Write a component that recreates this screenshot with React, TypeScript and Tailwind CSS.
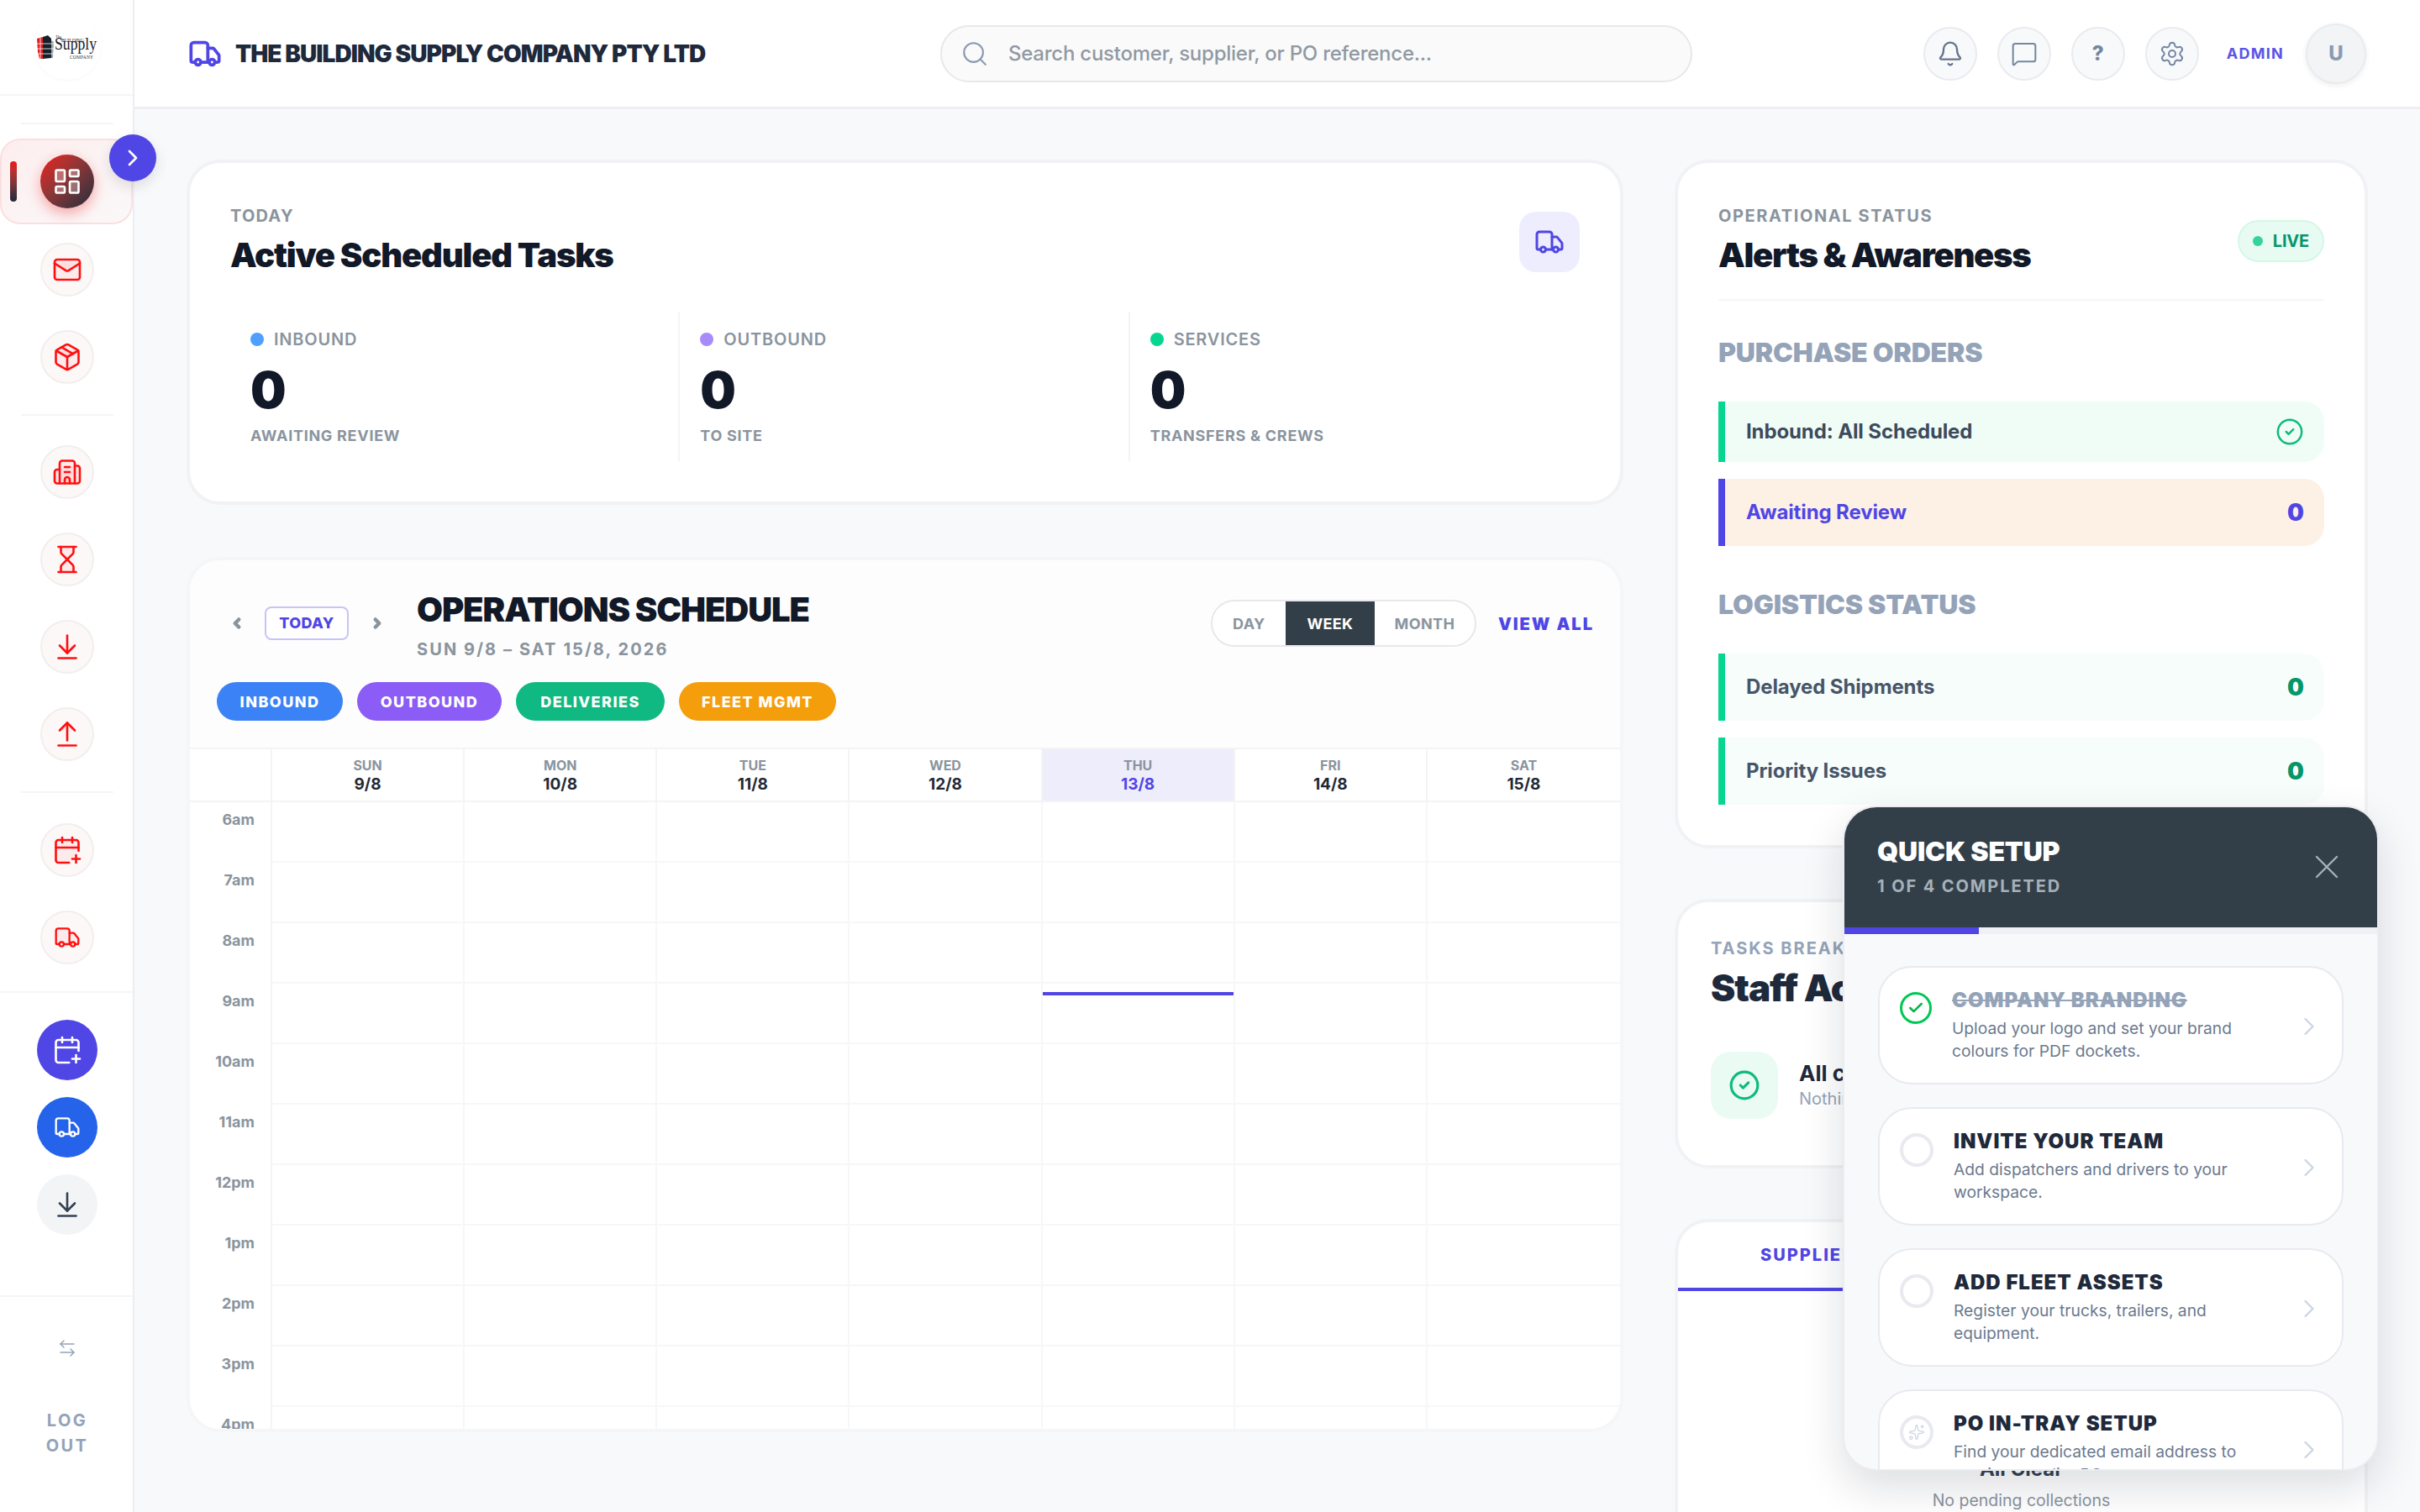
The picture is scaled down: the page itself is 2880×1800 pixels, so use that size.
import {
    ArrowDownToLine,
    ArrowLeftRight,
    ArrowUpFromLine,
    Bell,
    Building2,
    CalendarPlus,
    Check,
    ChevronLeft,
    ChevronRight,
    CircleCheck,
    Hourglass,
    LayoutDashboard,
    Mail,
    MessageSquare,
    Package,
    Search,
    Settings,
    Sparkles,
    Truck,
    X,
} from 'lucide-react';
import type { LucideIcon } from 'lucide-react';

const days = [
    { name: 'SUN', date: '9/8' },
    { name: 'MON', date: '10/8' },
    { name: 'TUE', date: '11/8' },
    { name: 'WED', date: '12/8' },
    { name: 'THU', date: '13/8', today: true },
    { name: 'FRI', date: '14/8' },
    { name: 'SAT', date: '15/8' },
];

const hours = ['6am', '7am', '8am', '9am', '10am', '11am', '12pm', '1pm', '2pm', '3pm', '4pm'];

const stats = [
    { label: 'INBOUND', dot: 'bg-[#4f9fff]', caption: 'AWAITING REVIEW' },
    { label: 'OUTBOUND', dot: 'bg-[#a78bfa]', caption: 'TO SITE' },
    { label: 'SERVICES', dot: 'bg-[#06d68f]', caption: 'TRANSFERS & CREWS' },
];

const chips = [
    { label: 'INBOUND', className: 'w-[150px] bg-[#3b82f6]' },
    { label: 'OUTBOUND', className: 'w-[172px] bg-[#8b5cf6]' },
    { label: 'DELIVERIES', className: 'w-[177px] bg-[#10b981]' },
    { label: 'FLEET MGMT', className: 'w-[187px] bg-[#f59e0b]' },
];

const setupSteps = [
    { title: 'COMPANY BRANDING', text: 'Upload your logo and set your brand colours for PDF dockets.', done: true },
    { title: 'INVITE YOUR TEAM', text: 'Add dispatchers and drivers to your workspace.' },
    { title: 'ADD FLEET ASSETS', text: 'Register your trucks, trailers, and equipment.' },
    { title: 'PO IN-TRAY SETUP', text: 'Find your dedicated email address to receive supplier POs.', sparkle: true },
];

function Logo() {
    return (
        <svg width="80" height="80" viewBox="0 0 80 80">
            <polygon points="4,31 11,29 11,55 7,55 5,47" fill="#e11d1d" />
            <polygon points="11,29 17,27 21,31 21,54 11,55" fill="#16202a" />
            <polygon points="21,33 24,35 23,54 21,54" fill="#9aa3ab" />
            <path d="M4 37h20M4 43h20M5 49h19M8 30v25" stroke="#fff" strokeWidth="0.8" />
            <text x="26" y="30" fontSize="5" fontFamily="Liberation Serif, serif" fill="#333">The</text>
            <text x="33" y="35" fontSize="6" fontFamily="Liberation Serif, serif" fill="#333" textLength="27">BUILDING</text>
            <text x="25" y="44" fontSize="22" fontFamily="Liberation Serif, serif" fill="#16202a" textLength="50" lengthAdjust="spacingAndGlyphs">Supply</text>
            <text x="43" y="55" fontSize="5.5" fontFamily="Liberation Serif, serif" fill="#333" textLength="28">COMPANY</text>
        </svg>
    );
}

function NavIcon({ icon: Icon, size = 36 }: { icon: LucideIcon; size?: number }) {
    return (
        <div className="flex h-16 w-16 items-center justify-center rounded-full border-2 border-[#f3eeee] bg-[#fdf8f8] text-[#ff1010]">
            <Icon size={size} strokeWidth={1.75} fill="currentColor" fillOpacity={0.06} />
        </div>
    );
}

function QuickAction({ icon: Icon, size = 36, className }: { icon: LucideIcon; size?: number; className: string }) {
    return (
        <div className={`flex h-[72px] w-[72px] items-center justify-center rounded-full ${className}`}>
            <Icon size={size} strokeWidth={1.75} />
        </div>
    );
}

function Sidebar() {
    return (
        <aside className="relative z-10 flex h-full w-[160px] shrink-0 flex-col items-center border-r-2 border-[#eceef2] bg-white pl-[2px]">
            <div className="-ml-[2px] flex h-[114px] w-[158px] shrink-0 items-start justify-center border-b-2 border-[#f5f6f8] pt-[15px] pl-[2px]">
                <div className="flex h-20 w-20 items-center justify-center rounded-full bg-white shadow-[0_1px_4px_rgba(0,0,0,0.03)]">
                    <Logo />
                </div>
            </div>
            <div className="mt-[32px] h-0.5 w-[110px] shrink-0 bg-[#f1f5f9]" />
            <div className="relative mt-[17px] -ml-[2px] flex h-[102px] w-[158px] shrink-0 items-center justify-center rounded-[24px] border-2 border-[#fbdfe0] bg-gradient-to-br from-[#fdeeee] to-[#faf8f9] pl-[2px]">
                <div className="absolute top-[25px] left-[10px] h-12 w-2 rounded-full bg-gradient-to-b from-[#ef1111] to-[#1e293b]" />
                <div className="flex h-16 w-16 items-center justify-center rounded-full bg-gradient-to-br from-[#ef1111] to-[#1e293b] text-white shadow-[0_6px_16px_rgba(239,17,17,0.35)]">
                    <LayoutDashboard size={36} strokeWidth={1.75} fill="rgba(255,255,255,0.3)" />
                </div>
                <div className="absolute -top-[7px] left-[128px] flex h-14 w-14 items-center justify-center rounded-full bg-[#4f46e5] text-white shadow-[0_6px_16px_rgba(15,23,42,0.12)]">
                    <ChevronRight size={32} strokeWidth={2} />
                </div>
            </div>
            <div className="mt-[22px] flex shrink-0 flex-col gap-10">
                <NavIcon icon={Mail} />
                <NavIcon icon={Package} />
            </div>
            <div className="mt-[36px] h-0.5 w-[110px] shrink-0 bg-[#f3f5f8]" />
            <div className="mt-[35px] flex shrink-0 flex-col gap-10">
                <NavIcon icon={Building2} />
                <NavIcon icon={Hourglass} />
                <NavIcon icon={ArrowDownToLine} />
                <NavIcon icon={ArrowUpFromLine} />
            </div>
            <div className="mt-[36px] h-0.5 w-[110px] shrink-0 bg-[#f3f5f8]" />
            <div className="mt-[36px] flex shrink-0 flex-col gap-10">
                <NavIcon icon={CalendarPlus} />
                <NavIcon icon={Truck} size={32} />
            </div>
            <div className="mt-[32px] -ml-[2px] w-[158px] shrink-0 border-t-2 border-[#f3f5f8]" />
            <div className="mt-[32px] flex shrink-0 flex-col gap-5">
                <QuickAction icon={CalendarPlus} className="bg-[#4f46e5] text-white" />
                <QuickAction icon={Truck} size={32} className="bg-[#2563eb] text-white" />
                <QuickAction icon={ArrowDownToLine} className="bg-[#f3f4f6] text-[#334155]" />
            </div>
            <div className="mt-[72px] -ml-[2px] w-[158px] shrink-0 border-t-2 border-[#f3f5f8]" />
            <ArrowLeftRight size={24} strokeWidth={1.5} className="mt-[49px] shrink-0 text-[#94a3b8]" />
            <div className="mt-[59px] w-[60px] shrink-0 text-center text-[20px] leading-[30px] font-bold tracking-[0.12em] text-[#94a3b8]">LOG OUT</div>
        </aside>
    );
}

function Header() {
    return (
        <header className="flex h-[130px] shrink-0 items-center border-b-[3px] border-[#eeeff2] bg-white px-[64px]">
            <Truck size={40} strokeWidth={2.25} className="text-[#4f46e5]" />
            <div className="ml-[16px] w-[839px] shrink-0 text-[28px] leading-8 font-black tracking-[-0.033em] text-[#1e293b]">THE BUILDING SUPPLY COMPANY PTY LTD</div>
            <div className="flex h-[68px] w-[895px] shrink-0 items-center rounded-full border-2 border-[#e7e8ec] bg-[#fafafa] pl-[22px]">
                <Search size={34} strokeWidth={1.5} className="text-[#8a9ab0]" />
                <span className="ml-[23px] text-[24px] font-medium tracking-[-0.01em] text-[#9099a3]">Search customer, supplier, or PO reference...</span>
            </div>
            <div className="ml-auto flex items-center gap-6">
                <div className="flex h-16 w-16 items-center justify-center rounded-full border-2 border-[#e9ebee] bg-[#f8f9fb] text-[#64748b]">
                    <Bell size={32} strokeWidth={1.75} />
                </div>
                <div className="flex h-16 w-16 items-center justify-center rounded-full border-2 border-[#e9ebee] bg-[#f8f9fb] text-[#7486a0]">
                    <MessageSquare size={32} strokeWidth={1.5} />
                </div>
                <div className="flex h-16 w-16 items-center justify-center rounded-full border-2 border-[#e9ebee] bg-[#f8f9fb] text-[24px] font-extrabold text-[#7486a0]">?</div>
                <div className="flex h-16 w-16 items-center justify-center rounded-full border-2 border-[#e9ebee] bg-[#f8f9fb] text-[#7486a0]">
                    <Settings size={32} strokeWidth={1.5} />
                </div>
            </div>
            <div className="mr-[26px] ml-[33px] text-[18px] font-bold tracking-[0.07em] text-[#5b54e8]">ADMIN</div>
            <div className="flex h-[72px] w-[72px] shrink-0 items-center justify-center rounded-full border-2 border-[#e9ebee] bg-[#f3f4f6] text-[24px] font-extrabold text-[#8a9ab0] shadow-[0_2px_6px_rgba(15,23,42,0.08)]">U</div>
        </header>
    );
}

function ScheduledTasks() {
    return (
        <section className="h-[411px] shrink-0 rounded-[40px] border-4 border-[#f1f2f5] bg-white px-[48px] pt-[49px]">
            <div className="flex items-start justify-between">
                <div>
                    <div className="text-[20px] leading-7 font-bold tracking-[0.06em] text-[#8a949e]">TODAY</div>
                    <h2 className="mt-[9px] text-[40px] leading-[48px] font-black tracking-[-0.029em] text-[#111827]">Active Scheduled Tasks</h2>
                </div>
                <div className="mt-[9px] flex h-[72px] w-[72px] items-center justify-center rounded-[20px] bg-[#eeedfd] text-[#4f46e5]">
                    <Truck size={36} strokeWidth={2} />
                </div>
            </div>
            <div className="mt-[43px] grid h-[178px] grid-cols-3">
                {stats.map((stat, index) => (
                    <div key={stat.label} className={`pt-[19px] pl-[24px] ${index < 2 ? 'border-r-2 border-[#f3f4f6]' : ''}`}>
                        <div className="flex items-center gap-3 text-[20px] leading-7 font-semibold tracking-[0.04em] text-[#8a949e]">
                            <span className={`h-4 w-4 rounded-full ${stat.dot}`} />
                            {stat.label}
                        </div>
                        <div className="mt-[16px] text-[60px] leading-[60px] font-black text-[#111827]">0</div>
                        <div className="mt-[12px] text-[18px] leading-[26px] font-bold tracking-[0.04em] text-[#8a949e]">{stat.caption}</div>
                    </div>
                ))}
            </div>
        </section>
    );
}

function Schedule() {
    return (
        <section className="h-[1042px] shrink-0 overflow-hidden rounded-[40px] border-4 border-[#f5f6f8] bg-[#fdfdfd]">
            <div className="h-[223px] pt-[45px] pr-[31px] pl-[32px]">
                <div className="flex items-start">
                    <div className="mt-[10px] flex items-center">
                        <ChevronLeft size={18} strokeWidth={6} className="ml-[15px] text-[#8a949e]" />
                        <div className="ml-[24px] flex h-10 w-[100px] items-center justify-center rounded-lg border-2 border-[#c7c4f9] bg-white pb-0.5 text-[18px] font-extrabold tracking-[0.02em] text-[#4f46e5]">TODAY</div>
                        <ChevronRight size={18} strokeWidth={6} className="ml-[25px] text-[#8a949e]" />
                    </div>
                    <div className="ml-[38px]">
                        <h2 className="-mt-[8px] text-[40px] leading-[44px] font-black tracking-[-0.028em] text-[#111827]">OPERATIONS SCHEDULE</h2>
                        <div className="mt-[11px] text-[20px] leading-7 font-bold tracking-[0.105em] text-[#8a949e]">SUN 9/8 – SAT 15/8, 2026</div>
                    </div>
                    <div className="mt-[2px] ml-auto flex items-center">
                        <div className="flex h-[56px] w-[316px] items-center overflow-hidden rounded-full border-2 border-[#e7e8ec] bg-white text-[18px] font-bold tracking-[0.02em] text-[#8a949e]">
                            <div className="flex w-[87px] justify-center">DAY</div>
                            <div className="flex h-full w-[106px] items-center justify-center bg-[#333f48] text-white">WEEK</div>
                            <div className="flex flex-1 justify-center">MONTH</div>
                        </div>
                        <div className="mt-[2px] ml-[26px] text-[20px] font-black tracking-[0.1em] text-[#4f46e5]">VIEW ALL</div>
                    </div>
                </div>
                <div className="mt-[25px] flex gap-[17px]">
                    {chips.map((chip) => (
                        <div key={chip.label} className={`flex h-[46px] items-center justify-center rounded-full text-[18px] font-extrabold tracking-[0.08em] text-white ${chip.className}`}>
                            {chip.label}
                        </div>
                    ))}
                </div>
            </div>
            <div className="border-t-2 border-[#f3f4f6] bg-white">
                <div className="grid h-[63px] grid-cols-[98px_repeat(7,1fr)] border-b-2 border-[#f3f4f6]">
                    <div className="border-r-2 border-[#f3f4f6]" />
                    {days.map((day) => (
                        <div key={day.name} className={`flex flex-col items-center justify-center border-r-2 border-[#f3f4f6] last:border-r-0 ${day.today ? 'bg-[#eeedfb]' : ''}`}>
                            <span className="text-[16px] leading-[22px] font-bold text-[#8a949e]">{day.name}</span>
                            <span className={`text-[19px] leading-[24px] font-bold ${day.today ? 'text-[#4f46e5]' : 'text-[#1f2937]'}`}>{day.date}</span>
                        </div>
                    ))}
                </div>
                {hours.map((hour) => (
                    <div key={hour} className="grid h-[72px] grid-cols-[98px_repeat(7,1fr)]">
                        <div className="border-r-2 border-[#f3f4f6] pt-[9px] pr-[19px] text-right text-[18px] leading-6 font-bold text-[#8a949e]">{hour}</div>
                        {days.map((day) => (
                            <div key={day.name} className="relative border-r-2 border-b-2 border-[#f6f7f8] last:border-r-0">
                                {day.today && hour === '9am' && <div className="absolute top-[10px] right-0 left-0 h-1 bg-[#4f46e5]" />}
                            </div>
                        ))}
                    </div>
                ))}
            </div>
        </section>
    );
}

function StatusRow({ label, value, bar, bg, labelClass, valueClass, height = 'h-20' }: { label: string; value?: string; bar: string; bg: string; labelClass: string; valueClass?: string; height?: string }) {
    return (
        <div className={`flex items-center justify-between rounded-r-[24px] border-l-8 pr-[24px] pl-[25px] ${height} ${bar} ${bg}`}>
            <span className={`text-[24px] font-bold tracking-[-0.005em] ${labelClass}`}>{label}</span>
            {value ? <span className={`text-[28px] font-black ${valueClass}`}>{value}</span> : <CircleCheck size={34} strokeWidth={1.75} className="text-[#10b981]" />}
        </div>
    );
}

function Alerts() {
    return (
        <section className="h-[820px] shrink-0 rounded-[40px] border-4 border-[#f1f2f5] bg-white px-[48px] pt-[49px]">
            <div className="flex items-start justify-between border-b-2 border-[#f5f6f9] pb-[28px]">
                <div>
                    <div className="text-[20px] leading-7 font-bold tracking-[0.08em] text-[#8a949e]">OPERATIONAL STATUS</div>
                    <h2 className="mt-[9px] text-[40px] leading-[48px] font-black tracking-[-0.032em] text-[#111827]">Alerts &amp; Awareness</h2>
                </div>
                <div className="mt-[19px] flex h-[50px] items-center gap-3 rounded-full border-2 border-[#d4f7e7] bg-[#e8fbf3] px-[16px] text-[20px] font-bold tracking-[-0.01em] text-[#059669]">
                    <span className="h-3 w-3 rounded-full bg-[#34d399]" />
                    LIVE
                </div>
            </div>
            <h3 className="mt-[42px] text-[32px] leading-[40px] font-black tracking-[-0.005em] text-[#94a3b8]">PURCHASE ORDERS</h3>
            <div className="mt-[38px] flex flex-col gap-5">
                <StatusRow label="Inbound: All Scheduled" bar="border-[#06d68f]" bg="bg-[#f0fdf7]" labelClass="text-[#3d4b5c]" height="h-[72px]" />
                <StatusRow label="Awaiting Review" value="0" bar="border-[#4f46e5]" bg="bg-[#fdf1e5]" labelClass="text-[#4f46e5]" valueClass="text-[#4f46e5]" />
            </div>
            <h3 className="mt-[50px] text-[32px] leading-[40px] font-black tracking-[-0.005em] text-[#94a3b8]">LOGISTICS STATUS</h3>
            <div className="mt-[38px] flex flex-col gap-5">
                <StatusRow label="Delayed Shipments" value="0" bar="border-[#06d68f]" bg="bg-[#f7fdfb]" labelClass="text-[#475569]" valueClass="text-[#059669]" />
                <StatusRow label="Priority Issues" value="0" bar="border-[#06d68f]" bg="bg-[#f7fdfb]" labelClass="text-[#475569]" valueClass="text-[#059669]" />
            </div>
        </section>
    );
}

function StaffCard() {
    return (
        <section className="h-[321px] shrink-0 rounded-[40px] border-4 border-[#f1f2f5] bg-white px-[39px] pt-[41px]">
            <div className="text-[20px] leading-7 font-bold tracking-[0.1em] text-[#94a3b8]">TASKS BREAKDOWN</div>
            <h2 className="mt-[9px] text-[44px] leading-[48px] font-black tracking-[-0.025em] text-[#1e293b]">Staff Activity</h2>
            <div className="mt-[52px] flex items-center gap-[25px]">
                <div className="flex h-20 w-20 items-center justify-center rounded-[24px] bg-[#eafbf3] text-[#10b981]">
                    <CircleCheck size={38} strokeWidth={2} />
                </div>
                <div>
                    <div className="text-[26px] leading-8 font-bold text-[#1e293b]">All clear</div>
                    <div className="text-[20px] leading-7 text-[#94a3b8]">Nothing scheduled</div>
                </div>
            </div>
        </section>
    );
}

function CollectionsCard() {
    return (
        <section className="flex h-[420px] shrink-0 flex-col rounded-t-[40px] border-4 border-[#f1f2f5] bg-white">
            <div className="grid h-[82px] shrink-0 grid-cols-2 text-center text-[20px] font-extrabold tracking-[0.1em]">
                <div className="border-b-4 border-[#4f46e5] pt-[24px] text-[#4f46e5]">SUPPLIER ORDERS</div>
                <div className="border-b-2 border-[#f3f4f6] pt-[24px] text-[#94a3b8]">COLLECTIONS</div>
            </div>
            <div className="mt-[196px] text-center text-[24px] leading-8 font-bold text-[#334155]">All Clear</div>
            <div className="mt-[7px] text-center text-[19.5px] leading-7 text-[#8a949e]">No pending collections</div>
        </section>
    );
}

function QuickSetup() {
    return (
        <div className="absolute top-[959px] left-[2193px] flex h-[792px] w-[638px] flex-col overflow-hidden rounded-[40px] border-2 border-[#ececf0] bg-[#f8f9fb] shadow-[0_20px_50px_rgba(15,23,42,0.14)]">
            <div className="flex h-[143px] shrink-0 items-start justify-between bg-[#333f48] pt-[33px] pr-[36px] pl-[39px]">
                <div>
                    <div className="text-[32px] leading-[40px] font-black tracking-[-0.005em] text-white">QUICK SETUP</div>
                    <div className="mt-[7px] text-[20px] leading-7 font-bold tracking-[0.095em] text-[#a6b0b8]">1 OF 4 COMPLETED</div>
                </div>
                <X size={48} strokeWidth={1.2} className="mt-[14px] text-[#a6b0b8]" />
            </div>
            <div className="h-2 shrink-0 bg-[#f0f1f4]">
                <div className="h-2 w-[160px] bg-[#4f46e5]" />
            </div>
            <div className="flex flex-col gap-[27px] px-[40px] pt-[38px]">
                {setupSteps.map((step) => (
                    <div key={step.title} className="flex h-[141px] shrink-0 items-start rounded-[40px] border-2 border-[#e9eaf0] bg-white pt-[23px] pr-[21px] pl-[24px]">
                        {step.done ? (
                            <div className="mt-[6px] flex h-[38px] w-[38px] shrink-0 items-center justify-center rounded-full border-[3px] border-[#00c853] text-[#00b84a]">
                                <Check size={20} strokeWidth={3} />
                            </div>
                        ) : (
                            <div className="mt-[6px] flex h-[40px] w-[40px] shrink-0 items-center justify-center rounded-full border-4 border-[#e9eaf0] text-[#cbd5e1]">{step.sparkle && <Sparkles size={20} strokeWidth={1.5} />}</div>
                        )}
                        <div className="ml-[24px] min-w-0 flex-1">
                            <div className={`text-[24px] leading-8 font-black tracking-[0.04em] ${step.done ? 'text-[#94a3b8] line-through' : 'text-[#1e293b]'}`}>{step.title}</div>
                            <div className="mt-[4px] w-[370px] text-[19.25px] leading-[27px] text-[#6b7a8f]">{step.text}</div>
                        </div>
                        <ChevronRight size={36} strokeWidth={1.5} className="mt-[29px] shrink-0 text-[#cbd5e1]" />
                    </div>
                ))}
            </div>
        </div>
    );
}

export default function App() {
    return (
        <div className="relative flex h-[1800px] w-[2880px] overflow-hidden bg-[#f8f9fb] font-[Inter,sans-serif]">
            <Sidebar />
            <div className="flex min-w-0 flex-1 flex-col">
                <Header />
                <main className="grid grid-cols-[1710px_825px] gap-x-[61px] overflow-hidden pt-[60px] pl-[62px]">
                    <div className="flex flex-col gap-[62px]">
                        <ScheduledTasks />
                        <Schedule />
                    </div>
                    <div className="flex flex-col gap-[60px]">
                        <Alerts />
                        <StaffCard />
                        <CollectionsCard />
                    </div>
                </main>
            </div>
            <QuickSetup />
        </div>
    );
}
